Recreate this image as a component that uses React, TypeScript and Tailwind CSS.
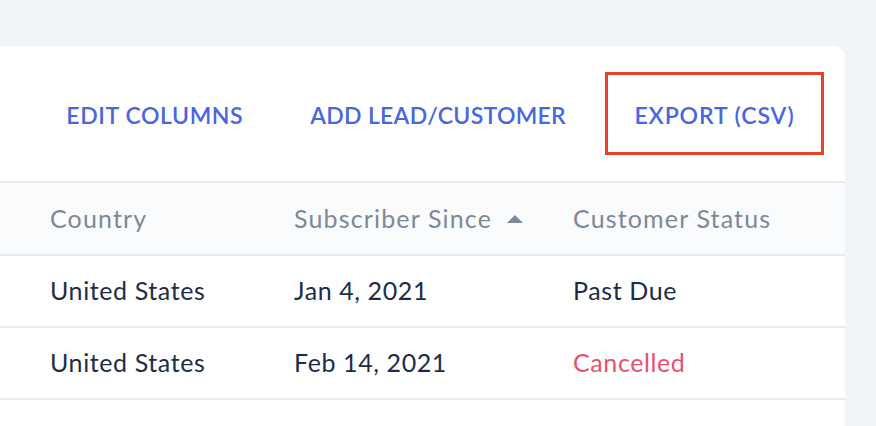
import React from "react";

const rows = [
  { country: "United States", since: "Jan 4, 2021", status: "Past Due", cancelled: false },
  { country: "United States", since: "Feb 14, 2021", status: "Cancelled", cancelled: true },
];

export default function App() {
  return (
    <div
      className="w-[876px] h-[426px] overflow-hidden bg-[#f1f4f9] pt-[46px]"
      style={{ fontFamily: "Lato, 'Open Sans', sans-serif" }}
    >
      <div className="w-[845px] h-[400px] bg-white rounded-tr-[12px]">
        <div className="h-[135px] flex items-center justify-end pr-[21px] gap-[11px]">
          <button className="px-[25px] pt-[3px] h-[83px] border-[3px] border-transparent text-[23px] font-semibold tracking-[0.6px] text-[#4767e0]">
            EDIT COLUMNS
          </button>
          <button className="px-[25px] pt-[3px] h-[83px] border-[3px] border-transparent text-[23px] font-semibold tracking-[0.3px] text-[#4767e0]">
            ADD LEAD/CUSTOMER
          </button>
          <button className="w-[219px] pt-[3px] h-[83px] flex items-center justify-center border-[3px] border-[#e8412a] text-[23px] font-semibold tracking-[0.9px] text-[#4767e0]">
            EXPORT (CSV)
          </button>
        </div>
        <div className="border-t-2 border-[#e6eaf0] bg-[#f9fbfd] h-[75px] flex items-center text-[25px] tracking-[1.15px] text-[#7d8995] border-b-2">
          <div className="pl-[50px] w-[294px]">Country</div>
          <div className="w-[279px] flex items-center">
            <span>Subscriber Since</span>
            <svg width="18" height="10" viewBox="0 0 18 10" className="ml-[14px]">
              <path d="M1 9 L9 1 L17 9 Z" fill="#7d8995" />
            </svg>
          </div>
          <div>Customer Status</div>
        </div>
        {rows.map((r, i) => (
          <div
            key={i}
            className="h-[72px] flex items-center text-[25px] tracking-[0.6px] text-[#1d2c47] border-b-2 border-[#e9edf2]"
          >
            <div className="pl-[50px] w-[294px]">{r.country}</div>
            <div className="w-[279px]">{r.since}</div>
            <div className={r.cancelled ? "text-[#e8506e]" : ""}>{r.status}</div>
          </div>
        ))}
      </div>
    </div>
  );
}
